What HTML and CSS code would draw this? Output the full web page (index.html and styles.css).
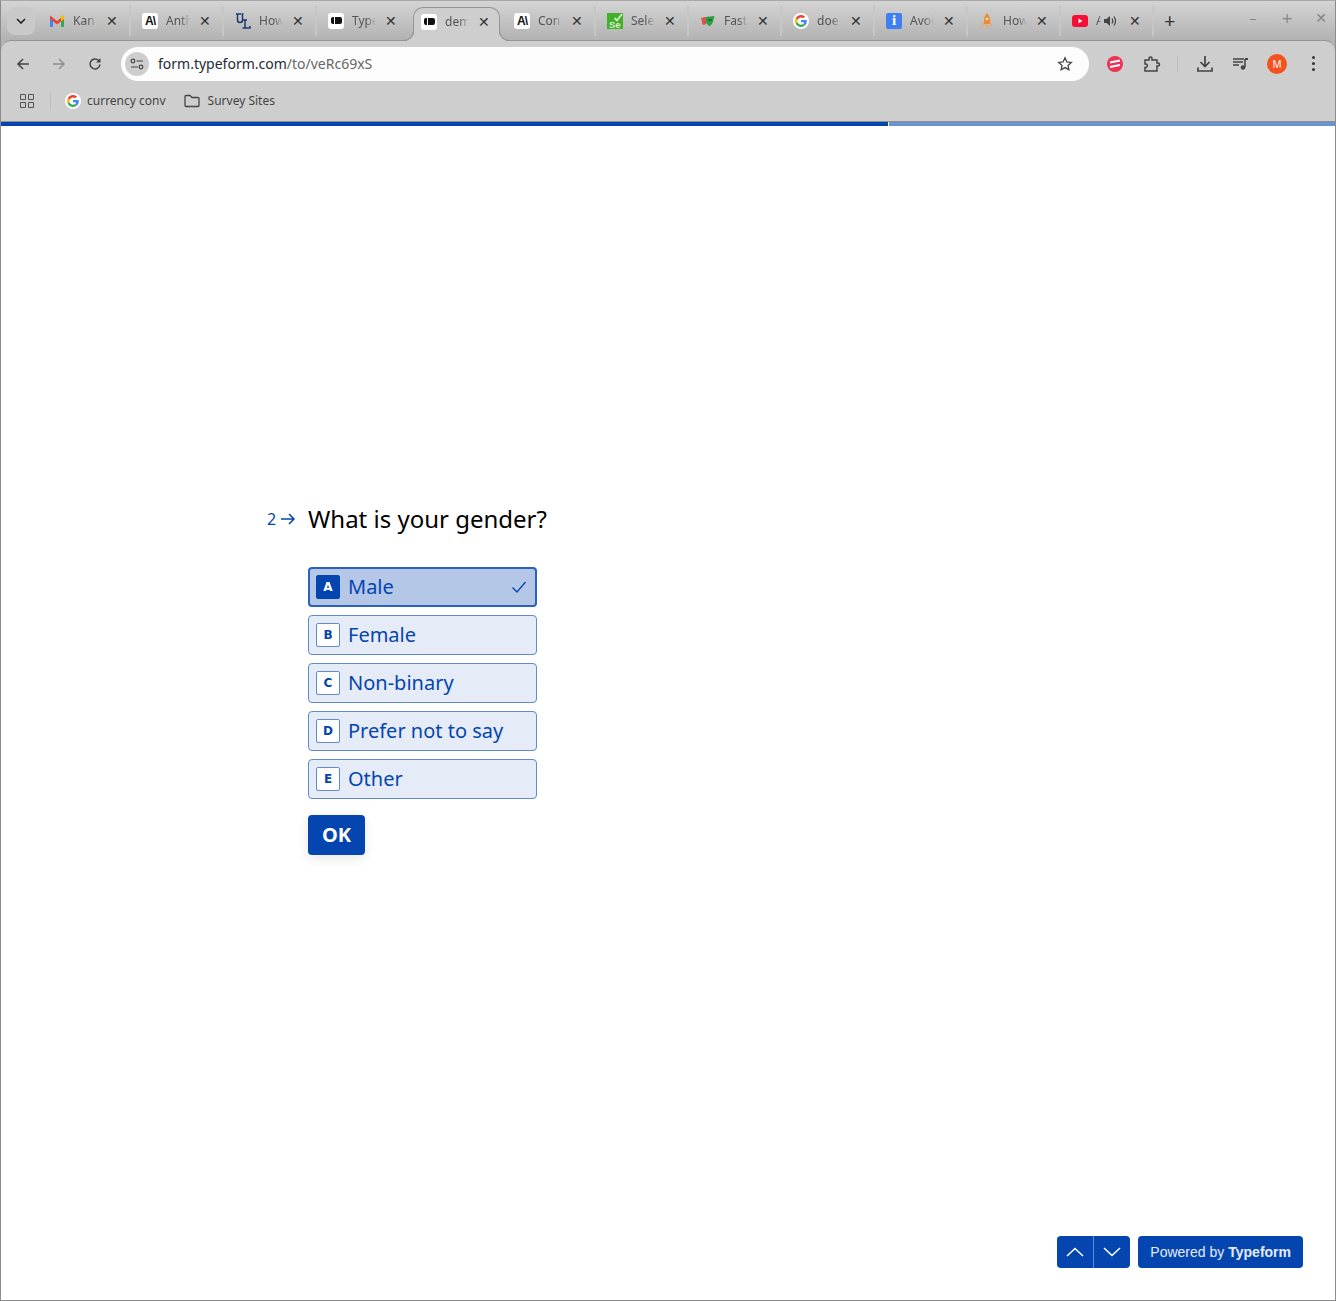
FILE: index.html
```html
<!DOCTYPE html>
<html lang="en">
<head>
  <meta charset="UTF-8">
  <meta name="viewport" content="width=device-width, initial-scale=1.0">
  <title>Typeform</title>
  <link rel="stylesheet" href="styles.css">
</head>

<body>
  <div class="window">
    <!-- Tabs -->
    <div class="tabstrip">
      <div class="tab-search">
        <svg width="10" height="6" viewBox="0 0 10 6"><path d="M1 1l4 4 4-4" fill="none" stroke="#222" stroke-width="1.6"/></svg>
      </div>

      <div class="tab">
        <svg class="fav" viewBox="0 0 16 16"><path d="M1 4v10h3V7z" fill="#4285f4"/><path d="M15 4v10h-3V7z" fill="#34a853"/><path d="M1 2.500l7 5.500 7-5.500V6L8 11.500 1 6z" fill="#ea4335"/><path d="M12 3.500l3-1.500V6l-3 2.300z" fill="#fbbc04"/></svg>
        <span class="tab-title">Kan</span><span class="tab-x">✕</span>
      </div>
      <div class="tab">
        <span class="fav fav-white fav-anth">A\</span>
        <span class="tab-title">Anth</span><span class="tab-x">✕</span>
      </div>
      <div class="tab">
        <svg class="fav" viewBox="0 0 16 16"><path d="M1 1h5M2.500 1v6q0 2.500 2.500 2.500T7.500 7V1M6.500 1h2" fill="none" stroke="#1d3a70" stroke-width="1.500"/><path d="M8 7h4M10 7v8M7.500 15H15v-2" fill="none" stroke="#1d3a70" stroke-width="1.500"/></svg>
        <span class="tab-title">How</span><span class="tab-x">✕</span>
      </div>
      <div class="tab tab-flat">
        <span class="fav fav-white"><i class="tf-mark"></i></span>
        <span class="tab-title">Type</span><span class="tab-x">✕</span>
      </div>
      <div class="tab tab-active">
        <span class="fav fav-white"><i class="tf-mark"></i></span>
        <span class="tab-title">dem</span><span class="tab-x">✕</span>
      </div>
      <div class="tab">
        <span class="fav fav-white fav-anth">A\</span>
        <span class="tab-title">Con</span><span class="tab-x">✕</span>
      </div>
      <div class="tab">
        <svg class="fav" viewBox="0 0 16 16"><rect width="16" height="16" fill="#43b02a"/><path d="M7.500 5l2.500 2.500L15 1" fill="none" stroke="#d5efcf" stroke-width="1.800"/><text x="2" y="15" font-size="9.500" font-weight="700" fill="#d5efcf" font-family="Liberation Sans, sans-serif">Se</text></svg>
        <span class="tab-title">Sele</span><span class="tab-x">✕</span>
      </div>
      <div class="tab">
        <svg class="fav" viewBox="0 0 16 16"><path d="M1 5l4-1 2 1v4q-1 3-3 3T2 9z" fill="#d9534a"/><path d="M6 4l8-1q1 0 0 2l-1 4q-2 4-3.500 4T6 9z" fill="#2e9e44"/><path d="M8 7h4" stroke="#16572a" stroke-width="1.200"/></svg>
        <span class="tab-title">Fast</span><span class="tab-x">✕</span>
      </div>
      <div class="tab">
        <span class="fav fav-white fav-round">
          <svg width="12" height="12" viewBox="0 0 48 48"><path fill="#ea4335" d="M24 9.500c3.500 0 6.700 1.200 9.200 3.600l6.900-6.900C35.900 2.400 30.500 0 24 0 14.600 0 6.500 5.400 2.600 13.200l8 6.200C12.500 13.600 17.800 9.500 24 9.500z"/><path fill="#4285f4" d="M47 24.500c0-1.600-.1-3.100-.4-4.500H24v9h12.900c-.6 3-2.300 5.500-4.800 7.200l7.700 6C44.300 38 47 31.800 47 24.500z"/><path fill="#fbbc05" d="M10.600 28.600c-.5-1.400-.8-3-.8-4.600s.3-3.200.8-4.600l-8-6.200C.9 16.500 0 20.100 0 24s.9 7.500 2.600 10.800z"/><path fill="#34a853" d="M24 48c6.500 0 11.900-2.100 15.800-5.800l-7.700-6c-2.200 1.400-4.900 2.300-8.100 2.300-6.200 0-11.500-4.200-13.400-9.800l-8 6.200C6.500 42.600 14.600 48 24 48z"/></svg>
        </span>
        <span class="tab-title">doe</span><span class="tab-x">✕</span>
      </div>
      <div class="tab">
        <span class="fav fav-info">i</span>
        <span class="tab-title">Avoi</span><span class="tab-x">✕</span>
      </div>
      <div class="tab">
        <svg class="fav" viewBox="0 0 16 16"><path d="M8 0q3 3 3 7v4H5V7q0-4 3-7z" fill="#ee8a33"/><path d="M5 8l-2 4v2l2-2zM11 8l2 4v2l-2-2zM6.500 12h3L8 16z" fill="#f2a65f"/><circle cx="8" cy="6" r="1.300" fill="#fbe3cc"/></svg>
        <span class="tab-title">How</span><span class="tab-x">✕</span>
      </div>
      <div class="tab tab-audio">
        <svg class="fav" viewBox="0 0 16 16"><rect y="2" width="16" height="12" rx="3" fill="#f50f37"/><path d="M6.500 5.500v5l4-2.500z" fill="#fff"/></svg>
        <span class="tab-title">A</span>
        <svg class="speaker" width="14" height="14" viewBox="0 0 14 14"><path d="M1 5v4h2.500L7 12V2L3.500 5z" fill="#444"/><path d="M9 4.500q1.500 2.500 0 5M11 2.500q3 4.500 0 9" fill="none" stroke="#444" stroke-width="1.200"/></svg>
        <span class="tab-x">✕</span>
      </div>

      <div class="new-tab">+</div>

      <div class="win-controls">
        <span>–</span><span>+</span><span>✕</span>
      </div>
    </div>

    <!-- Toolbar -->
    <div class="toolbar">
      <svg class="tool" width="16" height="16" viewBox="0 0 16 16"><path d="M14 8H3M8 3L3 8l5 5" fill="none" stroke="#444" stroke-width="1.500"/></svg>
      <svg class="tool" width="16" height="16" viewBox="0 0 16 16"><path d="M2 8h11M8 3l5 5-5 5" fill="none" stroke="#8f8f8f" stroke-width="1.500"/></svg>
      <svg class="tool" width="16" height="16" viewBox="0 0 16 16"><path d="M13 8.500A5 5 0 1 1 11.500 4.300L13 5.800" fill="none" stroke="#444" stroke-width="1.500"/><path d="M13.500 2v4.500H9z" fill="#444"/></svg>

      <div class="omnibox">
        <div class="site-btn">
          <svg width="14" height="12" viewBox="0 0 14 12"><circle cx="3" cy="3" r="1.800" fill="none" stroke="#444" stroke-width="1.200"/><path d="M6.500 3H13M1 9h7" stroke="#444" stroke-width="1.200"/><circle cx="11" cy="9" r="1.800" fill="none" stroke="#444" stroke-width="1.200"/></svg>
        </div>
        <div class="url">form.typeform.com<span class="url-path">/to/veRc69xS</span></div>
        <svg width="16" height="16" viewBox="0 0 16 16"><path d="M8 1.800l1.900 4.100 4.400.5-3.300 3 .9 4.400L8 11.600l-3.900 2.200.9-4.400-3.300-3 4.400-.5z" fill="none" stroke="#444" stroke-width="1.300"/></svg>
      </div>

      <div class="tool-right">
        <svg class="ext-red" width="16" height="16" viewBox="0 0 16 16"><circle cx="8" cy="8" r="8" fill="#ec3155"/><path d="M3 6.500l10-2M3 11l10-2" stroke="#fff" stroke-width="2.200"/></svg>
        <svg class="ext-puzzle" width="18" height="18" viewBox="0 0 18 18"><path d="M2 5h4V3.500a1.500 1.500 0 0 1 3 0V5h5v3h1a1.500 1.500 0 0 1 0 3h-1v5H2v-3.500h1a1.800 1.800 0 0 0 0-3.500H2z" fill="none" stroke="#444" stroke-width="1.500"/></svg>
        <span class="tool-sep"></span>
        <svg class="tool-dl" width="18" height="18" viewBox="0 0 18 18"><path d="M9 1v10M4.500 7L9 11.500 13.500 7M2 12.500V16h14v-3.500" fill="none" stroke="#444" stroke-width="1.700"/></svg>
        <svg class="tool-media" width="16" height="14" viewBox="0 0 16 14"><path d="M0 2h11M0 5h10M0 8h6" stroke="#444" stroke-width="1.300"/><path d="M12 2v8" stroke="#444" stroke-width="1.500"/><path d="M12 1h3v2h-3z" fill="#444"/><circle cx="10" cy="10.500" r="2.300" fill="#444"/></svg>
        <div class="avatar">M</div>
        <div class="dots"><i></i><i></i><i></i></div>
      </div>
    </div>

    <!-- Bookmarks -->
    <div class="bookmarks">
      <svg class="apps" width="14" height="14" viewBox="0 0 14 14"><path d="M.5.5h5v5h-5zM8.500.5h5v5h-5zM.5 8.500h5v5h-5zM8.500 8.500h5v5h-5z" fill="none" stroke="#555"/></svg>
      <span class="bm-sep"></span>
      <div class="bm">
        <span class="fav fav-white fav-round">
          <svg width="12" height="12" viewBox="0 0 48 48"><path fill="#ea4335" d="M24 9.500c3.500 0 6.700 1.200 9.200 3.600l6.900-6.900C35.900 2.400 30.500 0 24 0 14.600 0 6.500 5.400 2.600 13.200l8 6.200C12.500 13.600 17.800 9.500 24 9.500z"/><path fill="#4285f4" d="M47 24.500c0-1.600-.1-3.100-.4-4.500H24v9h12.900c-.6 3-2.300 5.500-4.800 7.200l7.700 6C44.300 38 47 31.800 47 24.500z"/><path fill="#fbbc05" d="M10.600 28.600c-.5-1.400-.8-3-.8-4.600s.3-3.200.8-4.600l-8-6.200C.9 16.500 0 20.100 0 24s.9 7.500 2.600 10.800z"/><path fill="#34a853" d="M24 48c6.500 0 11.900-2.100 15.800-5.800l-7.700-6c-2.200 1.400-4.900 2.300-8.100 2.300-6.200 0-11.500-4.200-13.400-9.800l-8 6.200C6.500 42.600 14.600 48 24 48z"/></svg>
        </span>
        currency conv
      </div>
      <div class="bm">
        <svg width="16" height="14" viewBox="0 0 16 14"><path d="M1 2.500q0-1 1-1h4l2 2h6q1 0 1 1v7q0 1-1 1H2q-1 0-1-1z" fill="none" stroke="#444" stroke-width="1.300"/></svg>
        Survey Sites
      </div>
    </div>

    <div class="progress"><div class="progress-fill" style="width: 888px"></div></div>

    <!-- Form -->
    <section class="form-page">
      <div class="question">
        <div class="q-num">
          <span>2</span>
          <svg width="16" height="14" viewBox="0 0 16 14"><path d="M1 7h13M9 2l5 5-5 5" fill="none" stroke="#0445af" stroke-width="1.500"/></svg>
        </div>
        <div class="q-body">
          <h1 class="q-title">What is your gender?</h1>
          <div class="options">
            <div class="option selected">
              <span class="key">A</span><span class="label">Male</span>
              <svg class="check" width="16" height="14" viewBox="0 0 16 14"><path d="M1.500 7.500L6 12 14.500 2" fill="none" stroke="#0445af" stroke-width="1.300"/></svg>
            </div>
            <div class="option"><span class="key">B</span><span class="label">Female</span></div>
            <div class="option"><span class="key">C</span><span class="label">Non-binary</span></div>
            <div class="option"><span class="key">D</span><span class="label">Prefer not to say</span></div>
            <div class="option"><span class="key">E</span><span class="label">Other</span></div>
          </div>
          <button class="ok-btn">OK</button>
        </div>
      </div>

      <div class="form-footer">
        <div class="nav-btns">
          <div class="nav-btn">
            <svg width="18" height="10" viewBox="0 0 18 10"><path d="M1 9l8-7.500L17 9" fill="none" stroke="#fff" stroke-width="1.600"/></svg>
          </div>
          <div class="nav-btn">
            <svg width="18" height="10" viewBox="0 0 18 10"><path d="M1 1l8 7.500L17 1" fill="none" stroke="#fff" stroke-width="1.600"/></svg>
          </div>
        </div>
        <div class="powered">Powered by <b>Typeform</b></div>
      </div>
    </section>
  </div>
</body>
</html>
```

FILE: styles.css
```css
* {
  box-sizing: border-box;
}

body {
  margin: 0;
  background-color: #fff;
  font-family: "Noto Sans", sans-serif;
}

.window {
  display: flex;
  flex-direction: column;
  height: 1301px;
  border: 1px solid #8c8c8c;
  border-top-color: #a8a8a8;
  background-color: #b2b2b2;
}

/* Tabs */
.tabstrip {
  display: flex;
  align-items: center;
  height: 39px;
  padding-left: 6px;
  background: linear-gradient(#d4d4d4, #b2b2b2);
}

.tab-search {
  display: flex;
  align-items: center;
  justify-content: center;
  width: 28px;
  height: 28px;
  margin-right: 3px;
  border-radius: 8px;
  background-color: #c9c9c9;
}

.tab {
  display: flex;
  align-items: center;
  flex: none;
  width: 93px;
  height: 30px;
  padding-left: 11px;
  border-right: 2px solid #c6c6c6;
  position: relative;
}

.tab-flat {
  border-right: none;
}

.tab-active {
  align-self: flex-end;
  width: 87px;
  height: 34px;
  margin: 0 3px -1px;
  padding-left: 7px;
  padding-bottom: 6px;
  background-color: #cecece;
  border: 1px solid #959595;
  border-bottom: none;
  border-radius: 10px 10px 0 0;
  z-index: 1;
}

/* the curved feet of the open tab */
.tab-active::before,
.tab-active::after {
  content: "";
  position: absolute;
  bottom: 0;
  width: 11px;
  height: 11px;
  border-bottom: 1px solid #959595;
}

.tab-active::before {
  left: -12px;
  border-right: 1px solid #959595;
  border-bottom-right-radius: 10px;
  box-shadow: 5px 5px 0 #cecece;
}

.tab-active::after {
  right: -12px;
  border-left: 1px solid #959595;
  border-bottom-left-radius: 10px;
  box-shadow: -5px 5px 0 #cecece;
}

.fav {
  display: flex;
  align-items: center;
  justify-content: center;
  flex: none;
  width: 16px;
  height: 16px;
}

.fav-white {
  background-color: #fff;
  border-radius: 3px;
}

.fav-round {
  border-radius: 50%;
}

.fav-anth {
  font-family: "Liberation Sans", sans-serif;
  font-size: 12px;
  font-weight: 700;
  color: #111;
  letter-spacing: -1px;
}

.fav-info {
  background-color: #3f7ff2;
  border-radius: 2px;
  color: #fff;
  font-family: "Liberation Serif", serif;
  font-size: 15px;
  font-weight: 700;
}

.tf-mark {
  display: block;
  width: 11px;
  height: 7px;
  border-radius: 2px;
  background: linear-gradient(90deg, #111 3px, #fff 3px, #fff 4px, #111 4px);
}

.tab-title {
  width: 24px;
  margin-left: 8px;
  overflow: hidden;
  white-space: nowrap;
  font-size: 12px;
  color: #555;
  -webkit-mask-image: linear-gradient(90deg, #000 60%, transparent);
  mask-image: linear-gradient(90deg, #000 60%, transparent);
}

.tab-x {
  margin-left: 9px;
  font-family: "DejaVu Sans", sans-serif;
  font-size: 14px;
  line-height: 1;
  color: #333;
}

.tab-audio .tab-title {
  width: 5px;
}

.speaker {
  margin-left: 2px;
}

.tab-audio .tab-x {
  margin-left: 12px;
}

.new-tab {
  margin-left: 10px;
  font-size: 20px;
  line-height: 1;
  color: #333;
}

.win-controls {
  display: flex;
  gap: 10px;
  margin-left: auto;
  margin-right: 2px;
  margin-top: -6px;
  font-family: "DejaVu Sans", sans-serif;
  font-size: 14px;
  color: #858585;
}

.win-controls span {
  width: 24px;
  text-align: center;
}

/* Toolbar */
.toolbar {
  display: flex;
  align-items: center;
  height: 46px;
  padding-left: 14px;
  border-top: 1px solid #959595;
  border-radius: 10px 10px 0 0;
  background-color: #cecece;
}

.tool {
  flex: none;
  margin-right: 20px;
}

.omnibox {
  display: flex;
  align-items: center;
  width: 968px;
  height: 34px;
  margin-left: -2px;
  padding: 0 16px 0 4px;
  border-radius: 17px;
  background-color: #fdfdfd;
}

.site-btn {
  display: flex;
  align-items: center;
  justify-content: center;
  width: 24px;
  height: 24px;
  border-radius: 50%;
  background-color: #cecece;
}

.url {
  flex: 1;
  margin-left: 9px;
  font-size: 14px;
  color: #1f2a38;
}

.url-path {
  color: #666;
}

.tool-right {
  display: flex;
  align-items: center;
  margin-left: 18px;
}

.ext-puzzle {
  margin-left: 20px;
}

.tool-sep {
  width: 1px;
  height: 16px;
  margin: 0 18px 0 16px;
  background-color: #bdbdbd;
}

.tool-media {
  margin-left: 19px;
}

.avatar {
  display: flex;
  align-items: center;
  justify-content: center;
  width: 20px;
  height: 20px;
  margin-left: 18px;
  border-radius: 50%;
  background-color: #f4511e;
  color: #fff;
  font-size: 10px;
}

.dots {
  display: flex;
  flex-direction: column;
  gap: 3px;
  margin-left: 25px;
}

.dots i {
  display: block;
  width: 3px;
  height: 3px;
  border-radius: 50%;
  background-color: #333;
}

/* Bookmarks */
.bookmarks {
  display: flex;
  align-items: center;
  height: 35px;
  padding-left: 19px;
  padding-bottom: 6px;
  background-color: #cecece;
  font-size: 12px;
  color: #444;
}

.bm-sep {
  width: 1px;
  height: 16px;
  margin: 0 14px 0 16px;
  background-color: #bdbdbd;
}

.bm {
  display: flex;
  align-items: center;
  gap: 6px;
  margin-right: 18px;
}

.bm:last-child {
  gap: 8px;
}

.progress {
  flex: none;
  height: 5px;
  border-top: 1px solid #8f8f8f;
  background-color: #6a93d2;
}

.progress-fill {
  height: 100%;
  background-color: #0445af;
  border-right: 1px solid #fff;
}

/* Form */
.form-page {
  display: flex;
  flex-direction: column;
  flex: 1;
  padding-top: 377px;
  background-color: #fff;
}

.question {
  display: flex;
  padding-left: 266px;
}

.q-num {
  display: flex;
  align-items: center;
  gap: 4px;
  width: 41px;
  height: 32px;
  font-size: 16px;
  color: #0445af;
}

.q-title {
  margin: 0 0 32px;
  font-size: 24px;
  font-weight: 400;
  line-height: 32px;
  color: #000;
}

.options {
  display: flex;
  flex-direction: column;
  gap: 8px;
  width: 229px;
}

.option {
  display: flex;
  align-items: center;
  height: 40px;
  padding: 0 7px;
  border: 1px solid #5e8ad0;
  border-radius: 4px;
  background-color: #e6ecf7;
}

.option.selected {
  padding: 0 6px;
  border: 2px solid #2a62bd;
  background-color: #b4c7e7;
}

.key {
  display: flex;
  align-items: center;
  justify-content: center;
  flex: none;
  width: 24px;
  height: 24px;
  border: 1px solid #5e8ad0;
  border-radius: 2px;
  background-color: #fff;
  font-family: "DejaVu Sans", sans-serif;
  font-size: 12px;
  font-weight: 700;
  color: #0445af;
}

.selected .key {
  border-color: #0445af;
  background-color: #0445af;
  color: #fff;
}

.label {
  flex: 1;
  margin-left: 8px;
  font-size: 20px;
  line-height: 28px;
  color: #0445af;
}

.check {
  margin-right: 2px;
}

.ok-btn {
  display: block;
  width: 57px;
  height: 40px;
  margin-top: 16px;
  padding: 0 0 2px;
  border: none;
  border-radius: 4px;
  background-color: #0445af;
  box-shadow: 0 3px 12px rgba(0, 0, 0, 0.1);
  font-family: "Noto Sans", sans-serif;
  font-size: 20px;
  font-weight: 700;
  color: #fff;
}

.form-footer {
  display: flex;
  justify-content: flex-end;
  gap: 8px;
  margin-top: auto;
  padding: 0 32px 32px 0;
}

.nav-btns {
  display: flex;
  overflow: hidden;
  height: 32px;
  border-radius: 4px;
}

.nav-btn {
  display: flex;
  align-items: center;
  justify-content: center;
  width: 36px;
  background-color: #0445af;
}

.nav-btn + .nav-btn {
  width: 37px;
  border-left: 1px solid #5e8ad0;
}

.powered {
  display: flex;
  align-items: center;
  gap: 4px;
  height: 32px;
  padding: 0 12px;
  border-radius: 4px;
  background-color: #0445af;
  font-family: "Liberation Sans", sans-serif;
  font-size: 14px;
  color: #e6ecf7;
}
```
